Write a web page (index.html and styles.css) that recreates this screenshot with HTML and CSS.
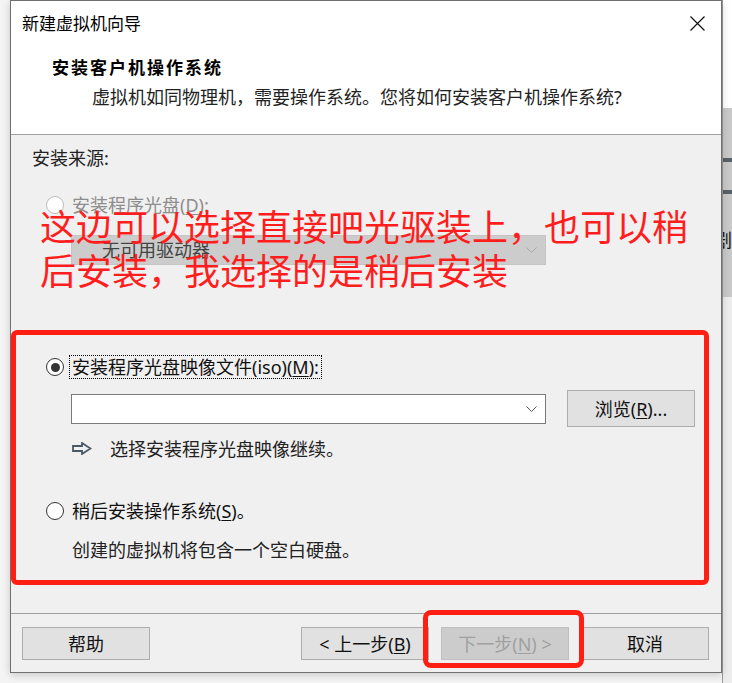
FILE: index.html
```html
<!DOCTYPE html>
<html lang="zh-CN">
<head>
<meta charset="utf-8">
<title>新建虚拟机向导</title>
<link rel="stylesheet" href="styles.css">
</head>
<body>
<div class="desktop">
  <div class="dialog">
    <div class="top">
      <div class="titlebar">
        <span class="title">新建虚拟机向导</span>
        <svg class="close" width="15" height="15" viewBox="0 0 15 15"><path d="M0.5 0.5 L14.5 14.5 M14.5 0.5 L0.5 14.5" stroke="#111" stroke-width="1.2" fill="none"/></svg>
      </div>
      <div class="head-title">安装客户机操作系统</div>
      <div class="head-sub">虚拟机如同物理机，需要操作系统。您将如何安装客户机操作系统?</div>
    </div>
    <div class="body">
      <div class="label-src">安装来源:</div>
      <div class="opt opt-disc">
        <span class="radio radio-disabled"></span>
        <span class="opt-label disabled">安装程序光盘(<u>D</u>):</span>
      </div>
      <div class="combo combo-disabled">
        <span class="combo-text">无可用驱动器</span>
        <svg class="chev" width="11" height="6" viewBox="0 0 11 6"><path d="M0.5 0.5 L5.5 5.5 L10.5 0.5" stroke="#a8a8a8" stroke-width="1" fill="none"/></svg>
      </div>
      <div class="opt opt-iso">
        <span class="radio radio-checked"><span class="dot"></span></span>
        <span class="opt-label focus">安装程序光盘映像文件(iso)(<u>M</u>):</span>
      </div>
      <div class="iso-row">
        <div class="combo combo-input">
          <svg class="chev" width="11" height="6" viewBox="0 0 11 6"><path d="M0.5 0.5 L5.5 5.5 L10.5 0.5" stroke="#555" stroke-width="1" fill="none"/></svg>
        </div>
        <button class="btn btn-browse">浏览(<u>R</u>)...</button>
      </div>
      <div class="hint">
        <svg class="arrow" width="20" height="13" viewBox="0 0 20 13"><path d="M1 4 H10 V1 L18.5 6.5 L10 12 V9 H1 Z" stroke="#4a5866" stroke-width="1.8" fill="none" stroke-linejoin="miter"/></svg>
        <span>选择安装程序光盘映像继续。</span>
      </div>
      <div class="opt opt-later">
        <span class="radio"></span>
        <span class="opt-label">稍后安装操作系统(<u>S</u>)。</span>
      </div>
      <div class="note">创建的虚拟机将包含一个空白硬盘。</div>
    </div>
    <div class="footer">
      <button class="btn">帮助</button>
      <div class="spacer"></div>
      <button class="btn">&lt; 上一步(<u>B</u>)</button>
      <button class="btn btn-disabled">下一步(<u>N</u>) &gt;</button>
      <button class="btn">取消</button>
    </div>
  </div>
  <div class="backwin">
    <div class="bw-top"></div>
    <div class="bw-gray">
      <div class="bw-dot d1"></div>
      <div class="bw-stripe"></div>
      <div class="bw-dot d2"></div>
      <div class="bw-stripe s2"></div>
      <div class="bw-char">剧</div>
    </div>
    <div class="bw-rest"></div>
  </div>
</div>
<div class="annot-text">这边可以选择直接吧光驱装上，也可以稍<br>后安装，我选择的是稍后安装</div>
<div class="annot-box box-options"></div>
<div class="annot-box box-next"></div>
</body>
</html>
```

FILE: styles.css
```css
* { box-sizing: border-box; }
html, body { margin: 0; padding: 0; }
body {
  width: 732px;
  height: 683px;
  overflow: hidden;
  background: #f4f4f4;
  font-family: "Noto Sans", "Noto Sans CJK SC", sans-serif;
  font-size: 18px;
  color: #111;
  position: relative;
}
u { text-decoration: underline; text-underline-offset: 2px; }

.desktop {
  display: flex;
  padding-left: 10px;
  height: 683px;
}

.dialog {
  width: 712px;
  height: 673px;
  border: 1px solid #707070;
  background: #f0f0f0;
  display: flex;
  flex-direction: column;
  box-shadow: 0 2px 8px rgba(0,0,0,0.18);
  flex: none;
  position: relative;
  z-index: 1;
}

.top {
  height: 134px;
  background: #fff;
  border-bottom: 1px solid #a0a0a0;
  flex: none;
}
.titlebar {
  height: 44px;
  display: flex;
  align-items: center;
  justify-content: space-between;
  padding: 0 16px 0 11px;
}
.title {
  font-family: "Noto Sans CJK SC", sans-serif;
  font-size: 17px;
  line-height: 24px;
  color: #000;
}
.close { display: block; margin-top: 1px; }
.head-title {
  margin-top: 11px;
  padding-left: 41px;
  font-weight: bold;
  font-size: 17px;
  letter-spacing: 2px;
  line-height: 24px;
  color: #000;
}
.head-sub {
  margin-top: 5px;
  padding-left: 81px;
  line-height: 24px;
  color: #222;
}

.body {
  height: 478px;
  flex: none;
  padding-left: 35px;
  display: flex;
  flex-direction: column;
  align-items: flex-start;
}
.label-src {
  margin-top: 11px;
  margin-left: -14px;
  line-height: 24px;
  color: #222;
}
.opt {
  display: flex;
  align-items: center;
  height: 24px;
}
.opt-disc { margin-top: 23px; }
.opt-iso { margin-top: 90px; }
.opt-later { margin-top: 39px; }
.radio {
  width: 18px;
  height: 18px;
  border-radius: 50%;
  border: 1px solid #333;
  background: #fff;
  display: flex;
  align-items: center;
  justify-content: center;
  flex: none;
}
.radio-disabled { border-color: #bcbcbc; }
.dot {
  width: 9px;
  height: 9px;
  border-radius: 50%;
  background: #333;
}
.opt-label {
  margin-left: 6px;
  padding: 0 2px;
  line-height: 22px;
  color: #111;
}
.opt-label.disabled { color: #8d8d8d; }
.opt-label.focus { outline: 1px dotted #000; }

.combo {
  width: 475px;
  height: 30px;
  display: flex;
  align-items: center;
  justify-content: space-between;
  padding-right: 8px;
}
.combo-disabled {
  margin-top: 18px;
  margin-left: 25px;
  background: #cccccc;
  border: 1px solid #c4c4c4;
  padding-left: 30px;
  color: #444;
}
.combo-text { line-height: 24px; }
.combo-input {
  background: #fff;
  border: 1px solid #7a7a7a;
  justify-content: flex-end;
}
.chev { display: block; }

.iso-row {
  margin-top: 11px;
  margin-left: 25px;
  display: flex;
  align-items: center;
  gap: 21px;
  height: 37px;
}
.btn {
  width: 128px;
  height: 33px;
  background: #e1e1e1;
  border: 1px solid #adadad;
  font-family: "Noto Sans", "Noto Sans CJK SC", sans-serif;
  font-size: 18px;
  color: #111;
  padding: 0;
  line-height: 24px;
  flex: none;
}
.btn-browse { height: 37px; }
.btn-disabled {
  background: #cccccc;
  border-color: #bfbfbf;
  color: #a0a0a0;
}

.hint {
  margin-top: 9px;
  margin-left: 26px;
  display: flex;
  align-items: center;
  height: 24px;
  color: #222;
}
.arrow { display: block; margin-right: 18px; }

.note {
  margin-top: 15px;
  margin-left: 26px;
  line-height: 24px;
  color: #222;
}

.footer {
  height: 59px;
  flex: none;
  border-top: 1px solid #a0a0a0;
  display: flex;
  align-items: flex-start;
  padding: 13px 12px 0 11px;
  gap: 12px;
}
.spacer { flex: 1; }

.backwin {
  flex: 1;
  display: flex;
  flex-direction: column;
  border-left: 1px solid #9a9a9a;
  overflow: hidden;
}
.bw-top { height: 108px; background: #fff; }
.bw-gray {
  height: 189px;
  background: #c9c9c9;
  position: relative;
  display: flex;
  flex-direction: column;
}
.bw-dot { width: 2px; height: 2px; background: #666; margin-left: 9px; }
.d1 { margin-top: 38px; }
.bw-stripe { height: 4px; background: #56616c; margin-top: 10px; }
.d2 { margin-top: 9px; }
.s2 { margin-top: 17px; }
.bw-char {
  margin-top: 33px;
  margin-left: -9px;
  font-family: "Noto Sans CJK SC", sans-serif;
  font-size: 18px;
  line-height: 24px;
  color: #111;
}
.bw-rest { flex: 1; background: #ededed; }

.annot-text {
  position: absolute;
  left: 40px;
  top: 203px;
  font-family: "Noto Sans CJK SC", sans-serif;
  font-size: 36px;
  line-height: 44px;
  color: #ff1d1d;
  white-space: nowrap;
  z-index: 5;
}
.annot-box {
  position: absolute;
  border: 5px solid #ff1e12;
  border-radius: 6px;
  z-index: 5;
}
.box-options { left: 11px; top: 330px; width: 698px; height: 255px; }
.box-next { left: 423px; top: 610px; width: 161px; height: 58px; border-radius: 8px; }
```
